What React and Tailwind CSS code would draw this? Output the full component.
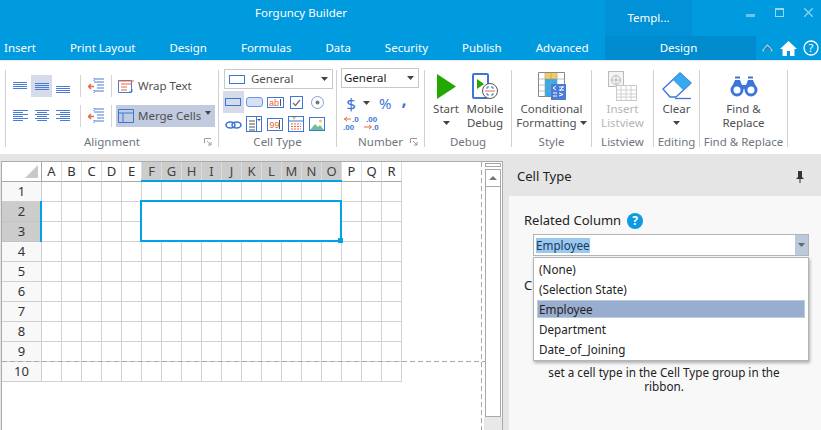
import { Fragment } from "react";

const cols = "ABCDEFGHIJKLMNOPQR".split("");
const rows = [1, 2, 3, 4, 5, 6, 7, 8, 9, 10];
const tabs = ["Insert", "Print Layout", "Design", "Formulas", "Data", "Security", "Publish", "Advanced"];
const options = ["(None)", "(Selection State)", "Employee", "Department", "Date_of_Joining"];

function Lines({ rows }) {
  // small paragraph-like alignment icon, each row is [y, x, width]
  return (
    <svg width="16" height="14" viewBox="0 0 16 14">
      {rows.map(([y, x, w]) => (
        <rect key={y} x={x} y={y} width={w} height="1" fill="#4a7bd6" />
      ))}
    </svg>
  );
}

function Caret({ color = "#444" }) {
  return (
    <svg width="7" height="4" viewBox="0 0 7 4" className="shrink-0">
      <path d="M0 0h7L3.5 4z" fill={color} />
    </svg>
  );
}

function Indent() {
  return (
    <svg width="17" height="16" viewBox="0 0 17 16">
      <path d="M6 1h10M6 4h10M9 7h7M9 10h7M6 13h10" stroke="#4a7bd6" fill="none" />
      <path d="M0 8.5h6M3 6l-2.5 2.5L3 11" stroke="#e8693c" strokeWidth="1.4" fill="none" />
      <path d="M6 0v3M6 12v3" stroke="#4a7bd6" strokeDasharray="1 1" fill="none" />
    </svg>
  );
}

function Sep() {
  return <div className="w-px h-[22px] bg-[#d4d4d4]" />;
}

function Group({ width, label, launcher, children }) {
  return (
    <div style={{ width }} className="shrink-0 h-[77px] border-r border-[#d0d0d0] flex flex-col relative">
      <div className="flex-1 min-h-0">{children}</div>
      <div className="h-[10px] leading-[10px] text-center text-[11.5px] text-[#6d7581] whitespace-nowrap">{label}</div>
      {launcher && (
        <svg width="8" height="8" viewBox="0 0 8 8" className="absolute right-[6px] bottom-[1px]">
          <path d="M.5 5V.5H7M3 3l4 4M7 4v3H4" stroke="#9a9a9a" fill="none" />
        </svg>
      )}
    </div>
  );
}

function CellIcon({ children, active }) {
  return (
    <div className={`w-[21px] h-[22px] flex items-center justify-center ${active ? "bg-[#d5dbe8]" : ""}`}>
      <svg width="17" height="17" viewBox="0 0 17 17">{children}</svg>
    </div>
  );
}

function Alignment() {
  return (
    <Group width={213} label="Alignment" launcher>
      <div className="flex flex-col gap-[8px] pt-[5px] pl-[5px] text-[11.5px] text-[#505050]">
        <div className="flex items-center h-[22px]">
          <div className="w-[20px] flex justify-center pb-[3px]"><Lines rows={[[4, 0, 14], [6, 0, 14], [8, 0, 14], [10, 0, 14]]} /></div>
          <div className="w-[21px] h-[22px] bg-[#d5dbe8] flex items-center justify-center"><Lines rows={[[4, 1, 14], [6, 1, 14], [8, 1, 14], [10, 1, 14]]} /></div>
          <div className="w-[22px] flex justify-center pt-[5px]"><Lines rows={[[4, 1, 14], [6, 1, 14], [8, 1, 14], [10, 1, 14]]} /></div>
          <div className="ml-[6px]"><Sep /></div>
          <div className="w-[30px] flex justify-center"><Indent /></div>
          <Sep />
          <div className="flex items-center gap-[3px] pl-[6px]">
            <svg width="17" height="17" viewBox="0 0 17 17">
              <path d="M.5 2.5h13v12H.5z" fill="none" stroke="#4a7bd6" />
              <path d="M0 3h16" stroke="#e8693c" />
              <path d="M3 6h10M3 9h6M3 12h6" stroke="#e8693c" />
              <path d="M14 11v3h-3" stroke="#4a7bd6" fill="none" />
            </svg>
            <span>Wrap Text</span>
          </div>
        </div>
        <div className="flex items-center h-[22px]">
          <div className="w-[20px] flex justify-center"><Lines rows={[[1, 0, 15], [3, 0, 10], [5, 0, 15], [7, 0, 10], [9, 0, 15], [11, 0, 10]]} /></div>
          <div className="w-[21px] flex justify-center"><Lines rows={[[1, 1, 14], [3, 3, 10], [5, 1, 14], [7, 3, 10], [9, 1, 14], [11, 3, 10]]} /></div>
          <div className="w-[22px] flex justify-center"><Lines rows={[[1, 1, 14], [3, 5, 10], [5, 1, 14], [7, 5, 10], [9, 1, 14], [11, 5, 10]]} /></div>
          <div className="ml-[6px]"><Sep /></div>
          <div className="w-[30px] flex justify-center"><Indent /></div>
          <Sep />
          <div className="ml-[4px] w-[99px] h-[22px] bg-[#c0cbdf] flex items-center gap-[4px] pl-[2px]">
            <svg width="16" height="16" viewBox="0 0 16 16">
              <path d="M.5 1.5h15v13H.5zM.5 5h15M5 5v9.5" fill="none" stroke="#3d76d8" />
            </svg>
            <span>Merge Cells</span>
            <svg width="6" height="4" viewBox="0 0 6 4" className="mb-[6px]"><path d="M0 0h6L3 4z" fill="#444" /></svg>
          </div>
        </div>
      </div>
    </Group>
  );
}

function CellType() {
  return (
    <Group width={118} label="Cell Type">
      <div className="pl-[5px] -mt-[1px]">
        <div className="w-[109px] h-[20px] border border-[#c8c8c8] flex items-center pl-[4px] pr-[4px] text-[11.5px] text-[#505050]">
          <svg width="16" height="9" viewBox="0 0 16 9" className="mr-[6px]"><rect x=".5" y=".5" width="15" height="8" fill="none" stroke="#3d76d8" /></svg>
          <span className="flex-1">General</span>
          <Caret />
        </div>
        <div className="grid grid-cols-[21px_21px_21px_21px_21px] mt-[2px] -ml-[1px]">
          <CellIcon active><rect x=".5" y="4.5" width="15" height="7" fill="none" stroke="#3d76d8" /></CellIcon>
          <CellIcon><rect x=".5" y="3.5" width="16" height="9" rx="2.5" fill="#d5e0f5" stroke="#6d95dc" /></CellIcon>
          <CellIcon><rect x=".5" y="3.5" width="16" height="10" fill="none" stroke="#3d76d8" /><text x="2" y="11.5" fontSize="9" fill="#e8693c" fontFamily="Liberation Sans">ab</text><path d="M13.5 5v7" stroke="#555" /></CellIcon>
          <CellIcon><rect x="2.5" y="2.5" width="12" height="12" fill="none" stroke="#3d76d8" /><path d="M5 9l2.5 2.5L12 6" stroke="#777" strokeWidth="1.4" fill="none" /></CellIcon>
          <CellIcon><circle cx="8.5" cy="8.5" r="6" fill="none" stroke="#7d9ede" /><circle cx="8.5" cy="8.5" r="2" fill="#777" /></CellIcon>
          <CellIcon><ellipse cx="5.5" cy="9" rx="4.5" ry="3" fill="none" stroke="#3d76d8" strokeWidth="1.6" /><ellipse cx="11.5" cy="9" rx="4.5" ry="3" fill="none" stroke="#3d76d8" strokeWidth="1.6" /></CellIcon>
          <CellIcon><rect x=".5" y=".5" width="15" height="15" fill="none" stroke="#3d76d8" /><path d="M3 5h6M3 8h6M3 11h6M3 14h6" stroke="#555" /><path d="M10.5 1v14" stroke="#3d76d8" /><path d="M11 3h4l-2 2z" fill="#555" /></CellIcon>
          <CellIcon><rect x=".5" y="2.5" width="15" height="12" fill="none" stroke="#3d76d8" /><text x="2.5" y="11.5" fontSize="9" fill="#e8693c" fontFamily="Liberation Sans">99</text><path d="M12.5 4v9" stroke="#555" /></CellIcon>
          <CellIcon><rect x=".5" y=".5" width="15" height="15" fill="none" stroke="#3d76d8" /><path d="M0 5h16" stroke="#3d76d8" /><path d="M3 8h10M3 10.5h10M3 13h10" stroke="#e8693c" strokeDasharray="2 1" /><path d="M4 1l2 3 2-3z" fill="#e8c13c" /></CellIcon>
          <CellIcon><rect x=".5" y="1.5" width="15" height="13" fill="#fff" stroke="#3d76d8" /><path d="M1 14l5-6 3 3 2-2 4 5z" fill="#6cbf9c" /><circle cx="11.5" cy="5" r="1.5" fill="#f2c94c" /></CellIcon>
        </div>
      </div>
    </Group>
  );
}

function NumberGroup() {
  return (
    <Group width={88} label="Number" launcher>
      <div className="pl-[4px] -mt-[2px]">
        <div className="w-[78px] h-[20px] border border-[#c8c8c8] flex items-center pl-[2px] pr-[4px] text-[11.5px] text-[#222]">
          <span className="flex-1">General</span>
          <Caret />
        </div>
        <div className="flex items-center h-[24px] mt-[3px] text-[#3d76d8]">
          <span className="w-[14px] ml-[3px] text-center text-[17px] leading-[17px]">$</span>
          <span className="ml-[5px]"><Caret /></span>
          <span className="ml-[9px] text-[15px] leading-[16px]">%</span>
          <span className="ml-[10px] text-[18px] leading-[14px] font-bold mb-[8px]">,</span>
        </div>
        <div className="flex pl-[2px] gap-[4px]">
          <svg width="17" height="16" viewBox="0 0 17 16">
            <path d="M1 4h7M4 2L1.5 4 4 6" stroke="#e8693c" fill="none" />
            <text x="9" y="6.5" fontSize="8" fontWeight="700" fill="#3d76d8" fontFamily="Liberation Sans">.0</text>
            <text x="0" y="15" fontSize="8" fontWeight="700" fill="#3d76d8" fontFamily="Liberation Sans">.00</text>
          </svg>
          <svg width="17" height="16" viewBox="0 0 17 16">
            <text x="2" y="6.5" fontSize="8" fontWeight="700" fill="#3d76d8" fontFamily="Liberation Sans">.00</text>
            <path d="M0 12h7M5 10l2.5 2L5 14" stroke="#e8693c" fill="none" />
            <text x="8" y="15" fontSize="8" fontWeight="700" fill="#3d76d8" fontFamily="Liberation Sans">.0</text>
          </svg>
        </div>
      </div>
    </Group>
  );
}

function BigButton({ icon, lines, caret, dim, width }) {
  return (
    <div style={{ width }} className={`flex flex-col items-center text-[11.5px] leading-[14px] ${dim ? "text-[#b5b5b5]" : "text-[#505050]"}`}>
      <div className="h-[32px] flex items-center justify-center">{icon}</div>
      {lines.map((l) => <span key={l} className="whitespace-nowrap">{l}</span>)}
      {caret && <div className="h-[14px] flex items-center"><Caret /></div>}
    </div>
  );
}

function Ribbon() {
  return (
    <div className="h-[94px] bg-white flex pl-[5px] pt-[9px] border-t border-[#e8e8e8] shrink-0">
      <div className="w-px h-[77px] bg-[#d0d0d0]" />
      <Alignment />
      <CellType />
      <NumberGroup />
      <Group width={87} label="Debug">
        <div className="flex pl-[6px]">
          <BigButton width={30} caret lines={["Start"]} icon={
            <svg width="19" height="25" viewBox="0 0 19 25"><path d="M0 0l19 12.5L0 25z" fill="#22a800" /></svg>
          } />
          <BigButton width={48} lines={["Mobile", "Debug"]} icon={
            <svg width="26" height="27" viewBox="0 0 26 27">
              <rect x="1" y="1" width="15" height="24" rx="1" fill="#fff" stroke="#3d76d8" strokeWidth="2" />
              <path d="M5 6l7 5-7 5z" fill="#22a800" />
              <circle cx="18" cy="18" r="7.5" fill="#fff" stroke="#555" />
              <path d="M13 18h10" stroke="#e8693c" />
              <path d="M15 16v-2h2M21 16v-2h-2M15 20v2h2M21 20v2h-2" stroke="#3d76d8" fill="none" />
            </svg>
          } />
        </div>
      </Group>
      <Group width={80} label="Style">
        <div className="flex justify-center">
          <BigButton width={78} lines={["Conditional"]} icon={
            <svg width="28" height="28" viewBox="0 0 28 28">
              <path d="M.5.5h26v24H.5z" fill="#fff" stroke="#888" />
              <rect x="7" y="1" width="12" height="6" fill="#f3cd5c" />
              <rect x="7" y="7" width="12" height="7" fill="#35ace8" />
              <rect x="7" y="14" width="6" height="10" fill="#35ace8" />
              <path d="M0 7h26M0 13h26M0 19h26M7 0v24M13 0v24M19 0v24" stroke="#999" fill="none" opacity=".6" />
              <rect x="13" y="12" width="15" height="16" fill="#4a7bd6" />
              <path d="M18 14l-3 2 3 2M21 15h5M21 18h5M25 14l-3 5M15 21h4M15 24h4M21 21l4 1.5-4 1.5" stroke="#fff" fill="none" />
            </svg>
          } />
        </div>
        <div className="flex items-center justify-center gap-[3px] text-[11.5px] leading-[14px] text-[#505050]">
          <span>Formatting</span>
          <Caret />
        </div>
      </Group>
      <Group width={62} label="Listview">
        <div className="flex justify-center">
          <BigButton dim width={60} lines={["Insert", "Listview"]} icon={
            <svg width="29" height="30" viewBox="0 0 29 30">
              <rect x=".5" y=".5" width="15" height="15" fill="#f3f3f3" stroke="#bbb" />
              <circle cx="8" cy="9" r="4.5" fill="none" stroke="#bbb" />
              <path d="M3.5 9h9M8 4.5v9" stroke="#bbb" />
              <rect x="8.5" y="14.5" width="20" height="15" fill="#fff" stroke="#c8c8c8" />
              <path d="M8 19h20M8 23h20M8 26h20M13 14v15M18 14v15M23 14v15" stroke="#d0d0d0" />
            </svg>
          } />
        </div>
      </Group>
      <Group width={46} label="Editing">
        <div className="flex justify-center">
          <BigButton width={44} caret lines={["Clear"]} icon={
            <svg width="30" height="28" viewBox="0 0 30 28">
              <path d="M1 17L18 1l11 10-15 14H8z" fill="#fff" stroke="#3d76d8" strokeWidth="1.3" />
              <path d="M18 1l11 10-8 7-10-10z" fill="#38a9ee" />
              <path d="M13 26.5h16" stroke="#3d76d8" strokeWidth="1.3" />
            </svg>
          } />
        </div>
      </Group>
      <Group width={88} label="Find & Replace">
        <div className="flex justify-center">
          <BigButton width={80} lines={["Find &", "Replace"]} icon={
            <svg width="28" height="21" viewBox="0 0 28 21">
              <path d="M1 13L5 4h5l2 5h4l2-5h5l4 9z" fill="#3d76d8" />
              <path d="M5 1.5h5M18 1.5h5" stroke="#3d76d8" strokeWidth="2" />
              <circle cx="7" cy="14" r="5" fill="#fff" stroke="#3d76d8" strokeWidth="3" />
              <circle cx="21" cy="14" r="5" fill="#fff" stroke="#3d76d8" strokeWidth="3" />
            </svg>
          } />
        </div>
      </Group>
    </div>
  );
}

function Sheet() {
  return (
    <div className="w-[502px] shrink-0 ml-[1px] mt-[7px] bg-white border-l border-t border-r border-[#ababab] flex relative">
      <div className="w-[480px] shrink-0">
        <div className="grid grid-cols-[40px_repeat(18,20px)] grid-rows-[20px_repeat(10,20px)] w-[400px] text-[13px] text-[#333] relative">
          <div className="bg-white border-r border-b border-[#aaa] relative">
            <div className="absolute right-[3px] bottom-[3px] w-0 h-0 border-l-[13px] border-l-transparent border-b-[13px] border-b-[#c8c8c8]" />
          </div>
          {cols.map((c, i) => (
            <div key={c} className={`flex items-center justify-center border-r border-b border-[#dcdcdc] ${i >= 5 && i <= 14 ? "bg-[#cccccc] text-[#444]" : "border-b-[#aaa]"}`}>{c}</div>
          ))}
          {rows.map((r) => (
            <Fragment key={r}>
              <div className={`flex items-center justify-center border-r border-b ${r === 2 || r === 3 ? "bg-[#cccccc] border-[#c4c4c4]" : "bg-[#f8f8f8] border-[#cfcfcf]"}`}>{r}</div>
              {cols.map((c) => <div key={c} className="border-r border-b border-[#d2d2d2]" />)}
            </Fragment>
          ))}
          {/* selected range marks on the headers */}
          <div className="absolute left-[139px] top-[18px] w-[201px] h-[2px] bg-[#00a2e8]" />
          <div className="absolute left-[38px] top-[39px] w-[2px] h-[41px] bg-[#00a2e8]" />
          <div className="absolute left-[138px] top-[38px] w-[202px] h-[42px] border-2 border-[#00a2e8] bg-white">
            <div className="absolute right-[-3px] bottom-[-3px] w-[5px] h-[5px] bg-[#00a2e8]" />
          </div>
        </div>
      </div>
      {/* page break guides */}
      <div className="absolute left-0 top-[199px] w-[483px] h-px bg-[repeating-linear-gradient(90deg,#a8a8a8_0_5px,transparent_5px_8px)]" />
      <div className="absolute left-[479px] top-0 bottom-0 w-px bg-[repeating-linear-gradient(180deg,#a8a8a8_0_5px,transparent_5px_8px)]" />
      <div className="flex-1 flex flex-col">
        <div className="flex-1 pl-[3px] pt-[1px]">
          <div className="w-[16px] h-[4px] border border-[#a8a8a8] bg-white" />
          <div className="w-[16px] h-[248px] mt-[2px] border border-[#a8a8a8] bg-white">
            <div className="h-[17px] border-b border-[#a8a8a8] flex items-center justify-center">
              <svg width="8" height="4" viewBox="0 0 8 4"><path d="M0 4h8L4 0z" fill="#777" /></svg>
            </div>
          </div>
        </div>
        <div className="h-[13px] bg-[#e8e8e8] ml-[2px]" />
      </div>
    </div>
  );
}

function Panel() {
  return (
    <div className="flex-1 min-w-0 flex flex-col">
      <div className="h-[42px] shrink-0 flex items-center justify-between pl-[14px] pr-[17px] pt-[3px] text-[13px] text-[#222]">
        <span>Cell Type</span>
        <svg width="8" height="12" viewBox="0 0 8 12"><path d="M2 0h4v6l2 2H0l2-2zM3.5 8h1v4h-1z" fill="#333" /></svg>
      </div>
      <div className="flex-1 ml-[6px] bg-[#f8f8f8] pl-[15px] pt-[16px] relative">
        <div className="flex items-center gap-[6px] text-[13px] text-[#222] h-[17px]">
          <span>Related Column</span>
          <span className="w-[16px] h-[16px] rounded-full bg-[#0a9be0] text-white font-bold text-[12px] flex items-center justify-center">?</span>
        </div>
        <div className="ml-[9px] mt-[5px] w-[276px] h-[22px] bg-white border border-[#b5b5b5] flex items-center text-[11.7px] pl-[2px]">
          <span className="bg-[#99c9ee] text-[#1a3a5c] leading-[15px]">Employee</span>
          <div className="ml-auto w-[13px] h-full bg-[#b9c9de] flex items-center justify-center"><Caret color="#666" /></div>
        </div>
        <div className="text-[13px] text-[#222] mt-[21px] h-[16px] leading-[16px]">C</div>
        <div className="mt-[72px] text-center text-[11.7px] leading-[14px] text-[#222] w-[286px] -ml-[3px]">
          <p>set a cell type in the Cell Type group in the</p>
          <p>ribbon.</p>
        </div>
        <div className="absolute left-[24px] top-[61px] w-[276px] h-[104px] bg-white border border-[#b5b5b5] shadow-[1px_2px_3px_rgba(0,0,0,0.3)] pt-[1px] px-[1px] text-[11.7px] text-[#222]">
          {options.map((o) => (
            <div key={o} className="h-[20px] py-[1px] mx-[2px]">
              <div className={`h-full flex items-center px-[2px] pt-[1px] ${o === "Employee" ? "bg-[#99aecf] outline outline-[#bccae0] -outline-offset-1" : ""}`}>{o}</div>
            </div>
          ))}
        </div>
      </div>
    </div>
  );
}

export default function App() {
  return (
    <div className="w-[821px] h-[430px] overflow-hidden bg-[#e5e5e5] flex flex-col font-['Noto_Sans',sans-serif]">
      <div className="h-[60px] bg-[#009ade] text-white text-[11.5px] shrink-0">
        <div className="h-[36px] flex">
          <div className="w-[605px] pl-[255px] pt-[4px]">Forguncy Builder</div>
          <div className="w-[87px] bg-[#0091d6] text-center pt-[9px]">Templ...</div>
          <div className="flex-1 flex items-start justify-end gap-[20px] pr-[8px] pt-[8px]">
            <div className="w-[9px] h-[3px] bg-[#6fc3ea] mt-[6px]" />
            <div className="w-[9px] h-[9px] border border-[#9ad6f0] border-t-2" />
            <svg width="9" height="9" viewBox="0 0 9 9"><path d="M0 0l9 9M9 0L0 9" stroke="#8fd0ee" strokeWidth="1.3" /></svg>
          </div>
        </div>
        <div className="h-[24px] flex items-center">
          <div className="w-[605px] flex gap-[34px] pl-[4px]">
            {tabs.map((t) => <span key={t}>{t}</span>)}
          </div>
          <div className="w-[151px] h-full bg-[#008ccf] flex items-center justify-center pr-[4px]">Design</div>
          <div className="flex-1 flex items-center justify-end gap-[6px] pr-[2px]">
            <svg width="11" height="8" viewBox="0 0 11 8" className="mr-[1px]">
              <path d="M1 7l4.5-5L10 7" fill="none" stroke="#a9d8f0" strokeWidth="2.4" />
              <path d="M2 6.500l3.500-3.500L9 6.500" fill="none" stroke="#2f6f99" strokeWidth="1.3" />
            </svg>
            <svg width="17" height="15" viewBox="0 0 17 15"><path d="M8.5 0L17 8h-2.5v7H10v-5H7v5H2.5V8H0z" fill="#fff" /></svg>
            <svg width="16" height="16" viewBox="0 0 16 16">
              <circle cx="8" cy="8" r="7" fill="none" stroke="#fff" strokeWidth="1.3" />
              <text x="8" y="12" fontSize="11" fill="#fff" textAnchor="middle" fontFamily="Noto Sans">?</text>
            </svg>
          </div>
        </div>
      </div>
      <Ribbon />
      <div className="flex-1 min-h-0 flex">
        <Sheet />
        <Panel />
      </div>
    </div>
  );
}
